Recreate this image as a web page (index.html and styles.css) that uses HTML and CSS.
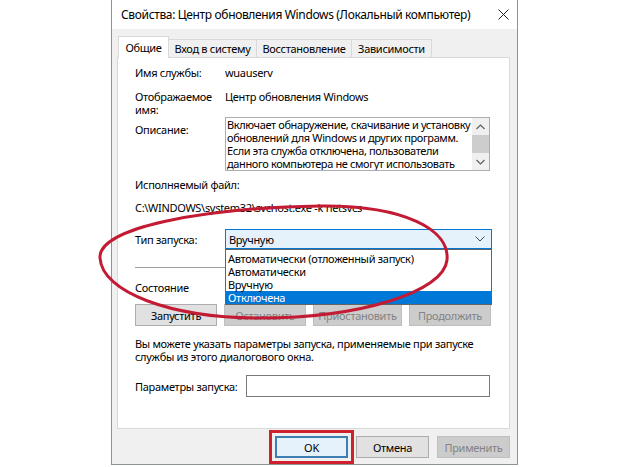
FILE: index.html
```html
<!DOCTYPE html>
<html lang="ru">
<head>
<meta charset="utf-8">
<title>Свойства: Центр обновления Windows</title>
<link rel="stylesheet" href="styles.css">
</head>
<body>
<div class="page">
  <div class="window">
    <div class="titlebar">
      <span class="title">Свойства: Центр обновления Windows (Локальный компьютер)</span>
      <svg class="close" width="11" height="11" viewBox="0 0 11 11"><path d="M0.5 0.5 L10.5 10.5 M10.5 0.5 L0.5 10.5" stroke="#222" stroke-width="1" fill="none"/></svg>
    </div>
    <div class="body">
      <div class="tabs">
        <div class="tab active">Общие</div>
        <div class="tab t2">Вход в систему</div>
        <div class="tab t3">Восстановление</div>
        <div class="tab t4">Зависимости</div>
      </div>
      <div class="panel">
        <div class="row r-name"><span class="label">Имя службы:</span><span>wuauserv</span></div>
        <div class="row r-display"><span class="label">Отображаемое<br>имя:</span><span>Центр обновления Windows</span></div>
        <div class="row r-desc">
          <span class="label desc-label">Описание:</span>
          <div class="descbox">
            <div class="desctext">Включает обнаружение, скачивание и установку<br>обновлений для Windows и других программ.<br>Если эта служба отключена, пользователи<br>данного компьютера не смогут использовать</div>
            <div class="scrollbar">
              <div class="sb-arrow"><svg width="9" height="6" viewBox="0 0 9 6"><path d="M0.5 5 L4.5 1 L8.5 5" stroke="#606060" stroke-width="1.2" fill="none"/></svg></div>
              <div class="sb-thumb"></div>
              <div class="sb-arrow"><svg width="9" height="6" viewBox="0 0 9 6"><path d="M0.5 1 L4.5 5 L8.5 1" stroke="#606060" stroke-width="1.2" fill="none"/></svg></div>
            </div>
          </div>
        </div>
        <div class="block r-exe">Исполняемый файл:</div>
        <div class="block r-path">C:\WINDOWS\system32\svchost.exe -k netsvcs</div>
        <div class="row r-type">
          <span class="label">Тип запуска:</span>
          <div class="combo">
            <span>Вручную</span>
            <svg class="chev" width="10" height="6" viewBox="0 0 10 6"><path d="M0.5 0.5 L5 5 L9.5 0.5" stroke="#444" stroke-width="1" fill="none"/></svg>
            <ul class="droplist">
              <li>Автоматически (отложенный запуск)</li>
              <li>Автоматически</li>
              <li>Вручную</li>
              <li class="selected">Отключена</li>
            </ul>
          </div>
        </div>
        <div class="sep"></div>
        <div class="block r-state">Состояние</div>
        <div class="btnrow">
          <button class="btn b1">Запустить</button>
          <button class="btn b2 disabled">Остановить</button>
          <button class="btn b3 disabled">Приостановить</button>
          <button class="btn b4 disabled">Продолжить</button>
        </div>
        <p class="hint">Вы можете указать параметры запуска, применяемые при запуске<br>службы из этого диалогового окна.</p>
        <div class="row r-params"><span class="plabel">Параметры запуска:</span><div class="input"></div></div>
      </div>
      <div class="footer">
        <button class="btn fbtn ok">OK</button>
        <button class="btn fbtn">Отмена</button>
        <button class="btn fbtn disabled">Применить</button>
      </div>
    </div>
  </div>
  <svg class="annot" width="640" height="467" viewBox="0 0 640 467">
    <path d="M100 258 C98 228 200 208 320 206 C405 205 450 230 447 260 C444 292 360 318 260 318 C170 318 102 292 100 258 Z" fill="none" stroke="#c21b33" stroke-width="3"/>
  </svg>
</div>
</body>
</html>
```

FILE: styles.css
```css
html, body {
  margin: 0;
  padding: 0;
  background: #ffffff;
}
body {
  font-family: "Noto Sans", "Open Sans", sans-serif;
  font-size: 11px;
  letter-spacing: -0.3px;
  color: #000;
}
.page {
  position: relative;
  width: 640px;
  height: 467px;
  overflow: hidden;
}
.window {
  margin-left: 111px;
  width: 405px;
  height: 464px;
  border: 1px solid #8c958c;
  border-top: none;
  background: #f0f0f0;
  display: flex;
  flex-direction: column;
}
.titlebar {
  height: 29px;
  background: #ffffff;
  display: flex;
  align-items: center;
  justify-content: space-between;
  padding: 0 8px 0 9px;
}
.title {
  font-size: 12px;
  letter-spacing: -0.35px;
  white-space: nowrap;
  color: #000;
}
.close {
  display: block;
  flex: none;
}
.body {
  flex: 1;
  display: flex;
  flex-direction: column;
}
.tabs {
  display: flex;
  align-items: flex-end;
  margin-top: 7px;
  padding-left: 6px;
  height: 21px;
  position: relative;
  z-index: 2;
}
.tab {
  height: 18px;
  box-sizing: border-box;
  border: 1px solid #d9d9d9;
  border-bottom: none;
  background: #f0f0f0;
  display: flex;
  align-items: center;
  justify-content: center;
  white-space: nowrap;
}
.tab + .tab { margin-left: -1px; }
.tab.active {
  width: 51px;
  height: 22px;
  background: #ffffff;
  margin-bottom: -1px;
}
.t2 { width: 89px; }
.t3 { width: 96px; }
.t4 { width: 81px; }
.panel {
  position: relative;
  margin: 0 7px 0 5px;
  height: 372px;
  box-sizing: border-box;
  border: 1px solid #d9d9d9;
  background: #ffffff;
  padding: 8px 17px 0 17px;
}
.row {
  display: flex;
  line-height: 13px;
}
.label {
  width: 90px;
  flex: none;
}
.r-display { margin-top: 11px; }
.r-desc { margin-top: 1px; }
.desc-label { padding-top: 6px; }
.descbox {
  width: 265px;
  height: 54px;
  box-sizing: border-box;
  border: 1px solid #abadb3;
  display: flex;
  overflow: hidden;
}
.desctext {
  flex: 1;
  padding: 0 0 0 1px;
  line-height: 13px;
  letter-spacing: -0.38px;
  white-space: nowrap;
  overflow: hidden;
}
.scrollbar {
  width: 17px;
  flex: none;
  background: #f0f0f0;
  display: flex;
  flex-direction: column;
}
.sb-arrow {
  height: 17px;
  display: flex;
  align-items: center;
  justify-content: center;
}
.sb-thumb {
  height: 18px;
  background: #cdcdcd;
}
.block { line-height: 13px; white-space: nowrap; }
.r-exe { margin-top: 7px; }
.r-path { margin-top: 10px; }
.r-type {
  margin-top: 15px;
  align-items: center;
}
.combo {
  position: relative;
  width: 267px;
  height: 20px;
  box-sizing: border-box;
  border: 1px solid #0078d7;
  background: #e5f1fb;
  display: flex;
  align-items: center;
  justify-content: space-between;
  padding: 0 6px 0 3px;
}
.droplist {
  position: absolute;
  z-index: 3;
  left: -1px;
  top: 19px;
  width: 267px;
  box-sizing: border-box;
  margin: 0;
  padding: 2px 0 0 0;
  list-style: none;
  background: #ffffff;
  border: 1px solid #646464;
  line-height: 13px;
}
.droplist li {
  padding-left: 2px;
  height: 13px;
  white-space: nowrap;
}
.droplist li.selected {
  background: #0078d7;
  color: #ffffff;
}
.sep {
  margin-top: 18px;
  height: 1px;
  background: #a0a0a0;
  width: 356px;
}
.r-state { margin-top: 13px; }
.btnrow {
  display: flex;
  gap: 7px;
  margin-top: 10px;
}
.btn {
  font-family: inherit;
  font-size: 11px;
  letter-spacing: -0.3px;
  height: 22px;
  box-sizing: border-box;
  border: 1px solid #adadad;
  background: #e1e1e1;
  color: #000;
  padding: 0;
  margin: 0;
}
.btn.disabled {
  background: #cccccc;
  border-color: #bfbfbf;
  color: #838383;
}
.b1, .b2, .b4 { width: 82px; }
.b3 { width: 89px; }
.hint {
  margin: 11px 0 0 0;
  line-height: 13px;
  white-space: nowrap;
}
.r-params {
  margin-top: 12px;
  align-items: center;
}
.plabel { width: 111px; flex: none; white-space: nowrap; }
.input {
  width: 244px;
  height: 22px;
  box-sizing: border-box;
  border: 1px solid #7a7a7a;
  background: #fff;
}
.footer {
  display: flex;
  justify-content: flex-end;
  gap: 8px;
  margin: 7px 7px 0 0;
}
.fbtn { width: 73px; }
.ok {
  border: 2px solid #3c7fb1;
  background: #e5f1fb;
  outline: 3px solid #d0202e;
  outline-offset: 3px;
}
.annot {
  position: absolute;
  left: 0;
  top: 0;
  pointer-events: none;
  z-index: 10;
}
```
